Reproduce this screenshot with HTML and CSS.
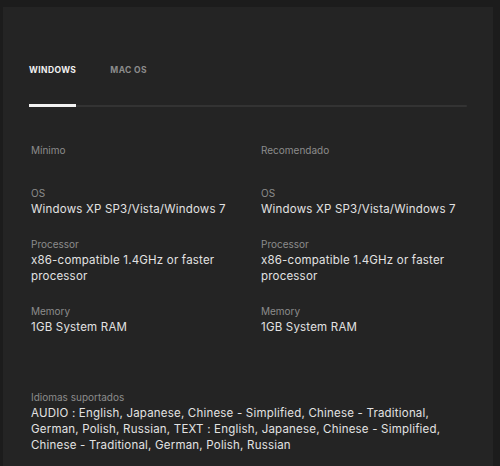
FILE: index.html
```html
<!DOCTYPE html>
<html lang="pt">
<head>
    <meta charset="UTF-8">
    <meta name="viewport" content="width=device-width, initial-scale=1.0">
    <title>Requisitos do sistema</title>
    <link rel="stylesheet" href="styles.css">
</head>
<body>

<div class="card">
    <div class="tabs">
        <span class="tab active">Windows</span>
        <span class="tab">Mac OS</span>
    </div>
    <div class="tab-line"></div>

    <div class="specs">
        <div class="col">
            <div class="col-title">Mínimo</div>
            <div class="item">
                <div class="label">OS</div>
                <div class="value">Windows XP SP3/Vista/Windows 7</div>
            </div>
            <div class="item">
                <div class="label">Processor</div>
                <div class="value">x86-compatible 1.4GHz or faster processor</div>
            </div>
            <div class="item">
                <div class="label">Memory</div>
                <div class="value">1GB System RAM</div>
            </div>
        </div>
        <div class="col">
            <div class="col-title">Recomendado</div>
            <div class="item">
                <div class="label">OS</div>
                <div class="value">Windows XP SP3/Vista/Windows 7</div>
            </div>
            <div class="item">
                <div class="label">Processor</div>
                <div class="value">x86-compatible 1.4GHz or faster processor</div>
            </div>
            <div class="item">
                <div class="label">Memory</div>
                <div class="value">1GB System RAM</div>
            </div>
        </div>
    </div>

    <div class="languages">
        <div class="label">Idiomas suportados</div>
        <div class="value">AUDIO : English, Japanese, Chinese - Simplified, Chinese - Traditional, German, Polish, Russian, TEXT : English, Japanese, Chinese - Simplified, Chinese - Traditional, German, Polish, Russian</div>
    </div>
</div>

</body>
</html>
```

FILE: styles.css
```css
body {
    margin: 0;
    background-color: #1c1c1c;
    font-family: Inter, "Noto Sans", sans-serif;
    height: 466px;
    overflow: hidden;
}
.card {
    margin: 7px 7px 0 3px;
    background: #242424;
    padding: 57px 26px 0 26px;
    height: 460px;
    box-sizing: border-box;
}
.tabs {
    display: flex;
    gap: 34px;
}
.tab {
    font-size: 8.5px;
    font-weight: 700;
    letter-spacing: 0.4px;
    text-transform: uppercase;
    color: #8c8c8c;
    line-height: 12px;
}
.tab.active {
    color: #f0f0f0;
}
.tab-line {
    position: relative;
    margin-top: 29px;
    height: 2px;
    background: #333;
    border-radius: 1px;
}
.tab-line::before {
    content: "";
    position: absolute;
    left: 0;
    top: -1px;
    width: 47px;
    height: 3px;
    background: #f2f2f2;
}
.specs {
    display: grid;
    grid-template-columns: 1fr 1fr;
    column-gap: 24px;
    padding: 36px 0 0 2px;
}
.col-title {
    font-size: 10px;
    color: #8c8c8c;
    line-height: 14px;
    margin-bottom: 29px;
}
.item {
    margin-bottom: 20px;
}
.label {
    font-size: 10px;
    color: #8c8c8c;
    line-height: 14px;
    margin-bottom: 1px;
}
.value {
    font-size: 11.5px;
    color: #e2e2e2;
    line-height: 16px;
    letter-spacing: 0.2px;
}
.languages {
    padding: 35px 0 0 2px;
}
```
